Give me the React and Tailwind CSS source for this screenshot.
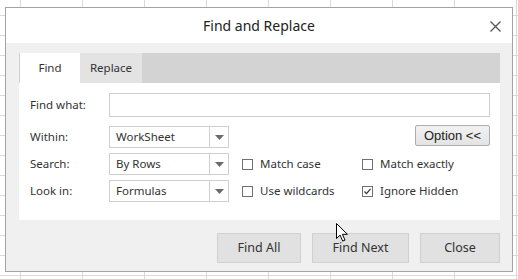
function Select({ value }) {
  return (
    <div className="flex h-[22px] w-[120px] border border-[#cfcfcf] bg-white">
      <div className="flex flex-1 items-center pl-[6px] text-[11.5px] text-[#333]">{value}</div>
      <div className="flex w-[19px] items-center justify-center border-l border-[#cfcfcf]">
        <svg width="9" height="5" viewBox="0 0 9 5">
          <path d="M0 0h9L4.5 5z" fill="#6b6b6b" />
        </svg>
      </div>
    </div>
  )
}

function Check({ label, checked }) {
  return (
    <div className="flex items-center text-[11.5px] text-[#333]">
      <div className="mr-[7px] flex h-[11px] w-[11px] items-center justify-center border border-[#707070] bg-white">
        {checked && (
          <svg width="9" height="9" viewBox="0 0 9 9">
            <path d="M1.5 4.5l2 2.2L7.5 1.8" fill="none" stroke="#333" strokeWidth="1.2" />
          </svg>
        )}
      </div>
      {label}
    </div>
  )
}

function Row({ label, className, children }) {
  return (
    <div className={`flex items-center ${className}`}>
      <div className="w-[79px] text-[11.5px] text-[#333]">{label}</div>
      {children}
    </div>
  )
}

export default function App() {
  return (
    <div
      className="relative h-[279px] w-[518px] overflow-hidden bg-white pl-[5px] pt-[7px] bg-[linear-gradient(to_right,#dadada_1px,transparent_1px),linear-gradient(to_bottom,#dadada_1px,transparent_1px)] bg-[size:62px_20px] bg-[position:20px_15px]"
      style={{ fontFamily: '"Noto Sans", "Open Sans", sans-serif' }}
    >
      <div className="flex h-[265px] w-[508px] flex-col border border-[#a3a3a3] bg-[#f0f0f0]">
        <div className="relative flex h-[35px] items-center justify-center bg-white text-[14px] text-[#222]">
          Find and Replace
          <svg className="absolute right-[11px] top-[13px]" width="11" height="11" viewBox="0 0 11 11">
            <path d="M0.5 0.5l10 10M10.5 0.5l-10 10" stroke="#555" strokeWidth="1.3" />
          </svg>
        </div>

        <div className="ml-[13px] mr-[12px] mt-[10px] flex flex-col">
          <div className="flex h-[30px] bg-[#d3d3d3] text-[11.5px] text-[#333]">
            <div className="flex w-[61px] items-center justify-center border-l border-[#d0d0d0] bg-white">Find</div>
            <div className="flex w-[62px] items-center justify-center bg-[#e3e3e3]">Replace</div>
          </div>
          <div className="flex h-[137px] flex-col bg-white pl-[11px] pr-[10px]">
            <Row label="Find what:" className="mt-[10px] h-[24px]">
              <div className="h-[24px] flex-1 border border-[#cfcfcf] bg-white" />
            </Row>
            <Row label="Within:" className="mt-[9px] h-[22px]">
              <Select value="WorkSheet" />
              <div className="flex-1" />
              <button
                className="-mt-[3px] h-[21px] w-[75px] rounded-[2px] border border-[#adadad] bg-[linear-gradient(#f2f2f2,#e3e3e3)] text-[13px] text-[#222]"
                style={{ fontFamily: '"Liberation Sans", Arial, sans-serif' }}
              >
                Option &lt;&lt;
              </button>
            </Row>
            <Row label="Search:" className="mt-[5px] h-[22px]">
              <Select value="By Rows" />
              <div className="ml-[13px] w-[120px]"><Check label="Match case" /></div>
              <Check label="Match exactly" />
            </Row>
            <Row label="Look in:" className="mt-[5px] h-[22px]">
              <Select value="Formulas" />
              <div className="ml-[13px] w-[120px]"><Check label="Use wildcards" /></div>
              <Check label="Ignore Hidden" checked />
            </Row>
          </div>
        </div>

        <div className="mr-[12px] mt-[13px] flex justify-end gap-[11px] text-[12.5px] text-[#333]">
          <button className="h-[30px] w-[84px] border border-[#d0d0d0] bg-[#e1e1e1]">Find All</button>
          <button className="h-[30px] w-[97px] border border-[#d0d0d0] bg-[#e1e1e1]">Find Next</button>
          <button className="h-[30px] w-[80px] border border-[#d0d0d0] bg-[#e1e1e1]">Close</button>
        </div>
      </div>

      <svg className="absolute left-[336px] top-[223px]" width="13" height="19" viewBox="0 0 13 19">
        <path d="M0.5 0.5v15l3.6-3.4 2.6 6 2.3-1-2.6-5.8h5z" fill="#fff" stroke="#000" strokeWidth="1" />
      </svg>
    </div>
  )
}
